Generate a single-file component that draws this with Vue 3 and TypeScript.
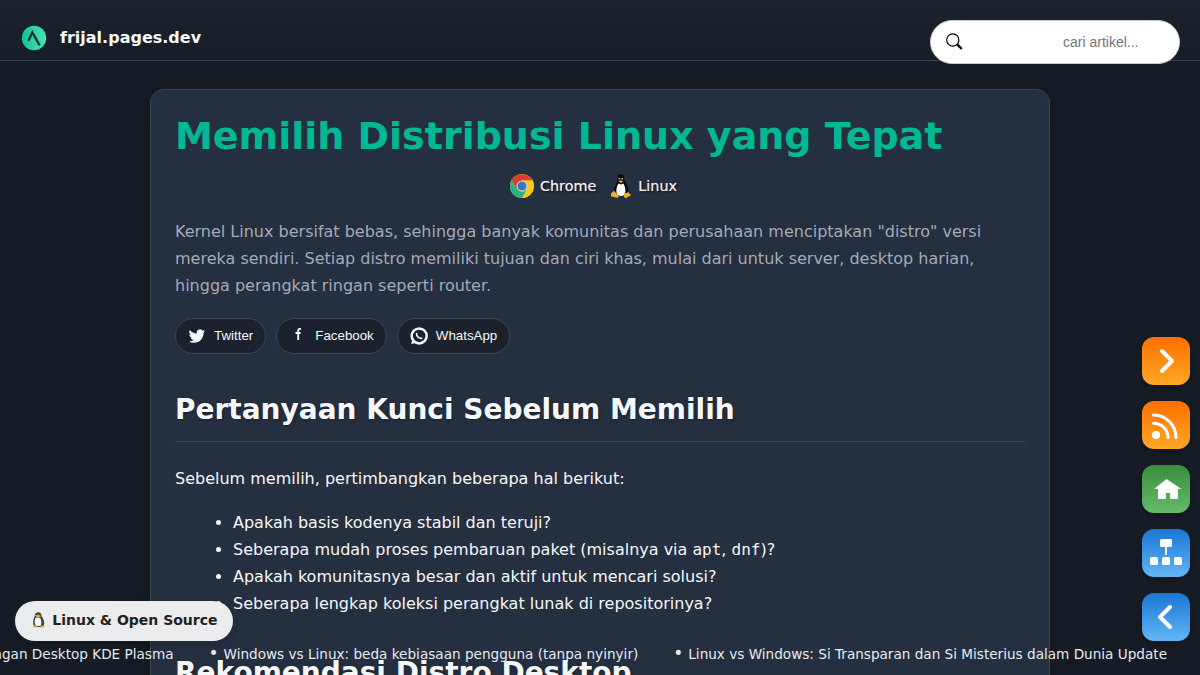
<script setup lang="ts">
const questions: string[] = [
  'Apakah basis kodenya stabil dan teruji?',
  'Seberapa mudah proses pembaruan paket (misalnya via `apt`, `dnf`)?',
  'Apakah komunitasnya besar dan aktif untuk mencari solusi?',
  'Seberapa lengkap koleksi perangkat lunak di repositorinya?',
]

const split = (text: string): { text: string; code: boolean }[] =>
  text.split('`').map((part, i) => ({ text: part, code: i % 2 === 1 }))
</script>

<template>
  <div class="page">
    <header class="topbar">
      <svg class="logo" viewBox="0 0 26 26">
        <defs>
          <linearGradient id="logoFill" x1="0" y1="0" x2="1" y2="0">
            <stop offset="0" stop-color="#12c294" />
            <stop offset="1" stop-color="#4be3b8" />
          </linearGradient>
        </defs>
        <circle cx="13" cy="13" r="12.2" fill="url(#logoFill)" />
        <path d="M7.4 15.9 11.3 7.2 18.6 20.4" fill="none" stroke="#12303a" stroke-width="2.3" stroke-linejoin="miter" />
      </svg>
      <span class="site">frijal.pages.dev</span>
      <div class="search">
        <svg width="18" height="18" viewBox="0 0 18 18" fill="none" stroke="#000">
          <circle cx="6.8" cy="7" r="6.1" stroke-width="1.2" />
          <path d="M11.2 11.4 15.8 16" stroke-width="2.4" />
        </svg>
        <input type="text" placeholder="cari artikel..." />
      </div>
    </header>

    <article class="card">
      <h1>Memilih Distribusi Linux yang Tepat</h1>
      <div class="tags">
        <span class="tag">
          <svg width="24" height="24" viewBox="0 0 24 24">
            <circle cx="12" cy="12" r="12" fill="#fbc918" />
            <path d="M1.6 6A12 12 0 0 1 22.4 6.500L12 6.600 6.800 15Z" fill="#dd3b32" />
            <path d="M1.600 6A12 12 0 0 0 12 24L17.200 15 12 17.400 6.800 15Z" fill="#27b583" />
            <path d="M22.600 6.600H12V17.400L17.200 15 12 24A12 12 0 0 0 22.600 6.600Z" fill="#fbc918" />
            <circle cx="12" cy="12" r="5.500" fill="#d3dde6" />
            <circle cx="12" cy="12" r="4.500" fill="#3b78b4" />
          </svg>
          Chrome
        </span>
        <span class="tag">
          <svg class="tux" width="24" height="24" viewBox="0 0 24 24">
            <path d="M8.5 4C8.3 1.2 10 0 11.8 0S15.4 1.4 15.2 4.6C15.3 7.8 19.7 11.5 19.3 18L15.5 22H8.2L4.8 17.5C5.2 12.5 8.7 9.4 8.5 4Z" fill="#080a0d" />
            <path d="M9.500 9.500 12 10.400 14.500 9.400C16.200 12.500 17.400 17.500 15.200 21Q12 23 8.700 21C6.300 17.800 7.600 12.400 9.500 9.500Z" fill="#fff" />
            <ellipse cx="10.500" cy="5" rx=".9" ry="1.200" fill="#aaa" />
            <ellipse cx="13.200" cy="5" rx="1" ry="1.200" fill="#aaa" />
            <circle cx="10.700" cy="5.200" r=".5" fill="#111" />
            <circle cx="13" cy="5.200" r=".5" fill="#111" />
            <path d="M9.400 7.400 11.700 6.200 14.300 7.400 12 9Z" fill="#e5a524" />
            <path d="M4.800 16.500 9.600 21.700C10 23.500 8.600 24 7 23.400L2.500 22.600C1.400 22 2.400 20.800 2.100 19 3 18.400 4.100 18.500 4.800 16.500ZM15.500 17.800C16 19.400 18.400 19.500 19 17.700 19.900 19.600 21 20 22 20.800 21.700 22 19.200 22.500 17.700 23.700 16 24.300 14.800 23.300 15 22Z" fill="#efb127" />
          </svg>
          Linux
        </span>
      </div>
      <p class="lead">
        Kernel Linux bersifat bebas, sehingga banyak komunitas dan perusahaan menciptakan "distro" versi
        mereka sendiri. Setiap distro memiliki tujuan dan ciri khas, mulai dari untuk server, desktop harian,
        hingga perangkat ringan seperti router.
      </p>
      <div class="share">
        <button>
          <svg width="18" height="18" viewBox="-1 -1 26 26" fill="#f4f8fc">
            <path d="M23.6 4.8a9.6 9.6 0 0 1-2.8.8 4.8 4.8 0 0 0 2.1-2.7 9.700 9.700 0 0 1-3.100 1.200 4.850 4.850 0 0 0-8.300 4.400A13.800 13.800 0 0 1 1.600 3.400a4.850 4.850 0 0 0 1.500 6.500 4.800 4.800 0 0 1-2.200-.6c0 2.300 1.600 4.400 3.900 4.900a4.900 4.900 0 0 1-2.200.1 4.860 4.860 0 0 0 4.500 3.400A9.800 9.800 0 0 1 0 19.700a13.800 13.800 0 0 0 7.500 2.200c9.100 0 14.300-7.700 14-14.600a10 10 0 0 0 2.100-2.500Z" />
          </svg>
          <span>Twitter</span>
        </button>
        <button>
          <svg width="18" height="18" viewBox="0 0 18 18">
            <path d="M12 1.900H10.800Q9.200 1.900 9.200 3.800V12.900M6.500 6H11.600" fill="none" stroke="#f4f8fc" stroke-width="1.900" />
          </svg>
          <span>Facebook</span>
        </button>
        <button>
          <svg width="18" height="18" viewBox="0 0 18 18" fill="none" stroke="#f4f8fc">
            <circle cx="9.200" cy="8.900" r="7.500" stroke-width="2.500" />
            <path d="M2.300 12.500 1.200 17 5.700 16Z" fill="#f4f8fc" stroke="none" />
            <path d="M6.600 6.500C6.300 9 8.900 11.700 11.700 11.300" stroke-width="1.600" stroke-linecap="round" />
          </svg>
          <span>WhatsApp</span>
        </button>
      </div>
      <h2>Pertanyaan Kunci Sebelum Memilih</h2>
      <p class="intro">Sebelum memilih, pertimbangkan beberapa hal berikut:</p>
      <ul>
        <li v-for="q in questions" :key="q"><template v-for="(part, i) in split(q)" :key="i"><code v-if="part.code">{{ part.text }}</code><template v-else>{{ part.text }}</template></template></li>
      </ul>
      <h2 class="next">Rekomendasi Distro Desktop</h2>
    </article>

    <nav class="rail">
      <a class="orange">
        <svg viewBox="0 0 48 48"><path d="M20 14 30 24 20 34" class="arrow" /></svg>
      </a>
      <a class="orange">
        <svg viewBox="0 0 48 48">
          <circle cx="14" cy="34" r="4.100" fill="#fff" />
          <path d="M11.500 22.200A14.500 14.500 0 0 1 26 36.500M11.500 14A22.500 22.500 0 0 1 34 36.500" fill="none" stroke="#fff" stroke-width="3" stroke-linecap="round" />
        </svg>
      </a>
      <a class="green">
        <svg viewBox="0 0 48 48" fill="#fff"><path d="M24.500 14 39.500 24H36V34H28.200V28H23.800V34H16V24H12Z" /></svg>
      </a>
      <a class="blue">
        <svg viewBox="0 0 48 48" fill="#fff">
          <rect x="18" y="10" width="12" height="8" rx="1.500" />
          <rect x="23" y="17" width="2" height="9" />
          <rect x="8" y="28" width="8" height="8" rx="1.500" />
          <rect x="20" y="28" width="8" height="8" rx="1.500" />
          <rect x="32" y="28" width="8" height="8" rx="1.500" />
        </svg>
      </a>
      <a class="blue">
        <svg viewBox="0 0 48 48"><path d="M28 14 18 24 28 34" class="arrow" /></svg>
      </a>
    </nav>

    <div class="badge">
      <svg width="14" height="16" viewBox="0 0 14 16">
        <path d="M2.800 3.800Q3.200.2 6.300.3T9.600 4.200Q13 8.200 11.900 13L10.300 15H4L1.200 12.500Q1 7 2.800 3.800Z" fill="#3c4245" />
        <path d="M3.800 5.500 8 5.700Q10.500 10 8.600 14H4.200Q1.400 10 3.800 5.500Z" fill="#f3f3f1" />
        <path d="M2.900 3.300 6.500 2.500 9.300 4.300 5.500 5.800Z" fill="#f1a51c" />
        <path d="M1 14.200 4 13.200 6 15.300H1.500ZM8 15.300 9.700 13.200 12.200 14.500 11 15.500Z" fill="#dba132" />
      </svg>
      <span>Linux &amp; Open Source</span>
    </div>

    <div class="ticker">
      <span>Mengenal Lingkungan Desktop KDE Plasma</span>
      <span><i>•</i>Windows vs Linux: beda kebiasaan pengguna (tanpa nyinyir)</span>
      <span><i>•</i>Linux vs Windows: Si Transparan dan Si Misterius dalam Dunia Update</span>
    </div>
  </div>
</template>

<style>
body {
  margin: 0;
  overflow: hidden;
}
</style>

<style scoped>
.page {
  position: relative;
  height: 675px;
  overflow: hidden;
  background: #161c26;
  color: #f5f8fb;
  font: 16px/27px 'DejaVu Sans', sans-serif;
}
.topbar {
  position: relative;
  z-index: 2;
  box-sizing: border-box;
  height: 61px;
  padding: 14px 20px 0 21px;
  display: flex;
  align-items: flex-start;
  border-bottom: 1px solid #3a474f;
  background: linear-gradient(#1c232e, #161d27);
}
.logo {
  width: 26px;
  height: 26px;
  margin-top: 11px;
}
.site {
  margin: 10px 0 0 13px;
  font-weight: bold;
}
.search {
  box-sizing: border-box;
  width: 250px;
  height: 44px;
  margin: 6px 0 0 auto;
  padding: 0 39px 0 15px;
  display: flex;
  align-items: center;
  justify-content: space-between;
  border: 1px solid #ccc;
  border-radius: 22px;
  background: #fff;
}
.search input {
  width: 77px;
  padding: 0;
  border: 0;
  outline: 0;
  background: transparent;
  font: 14px 'Liberation Sans', sans-serif;
}
.search input::placeholder {
  color: #757575;
}
.card {
  box-sizing: border-box;
  width: 900px;
  height: 700px;
  margin: 28px auto 0;
  padding: 24px;
  border: 1px solid #3a494f;
  border-radius: 14px;
  background: #242f3f;
  box-shadow: 0 8px 30px rgba(0, 0, 0, 0.3);
}
h1 {
  margin: 0;
  font-size: 38px;
  line-height: 44px;
  color: #00b894;
}
.tags {
  display: flex;
  justify-content: center;
  gap: 12px;
  margin: 15px 13px 0 0;
  height: 26px;
  align-items: center;
}
.tag {
  display: flex;
  align-items: center;
  gap: 6px;
  font-size: 14.4px;
  color: #eee;
  text-shadow: 0 0 1px #aaa, 1px 1px 2px #000;
}
.tux {
  margin: 0 -1px 0 1px;
}
.lead {
  margin: 19px 0 0;
  color: #a3abb5;
}
.share {
  display: flex;
  gap: 10px;
  margin-top: 19px;
}
button {
  box-sizing: border-box;
  height: 36px;
  padding: 0 12px;
  display: flex;
  align-items: center;
  gap: 8px;
  border: 1px solid #3a474f;
  border-radius: 18px;
  background: #1b222e;
  color: #f5f8fb;
  font: 13.333px 'Liberation Sans', sans-serif;
}
button span {
  padding-bottom: 2px;
}
h2 {
  margin: 32px 0 0;
  padding-bottom: 8px;
  border-bottom: 1px solid #3d4b55;
  font-size: 28px;
  line-height: 47px;
  text-shadow: 1px 1px 3px rgba(0, 0, 0, 0.25);
}
.intro {
  margin: 23px 0 0;
}
ul {
  margin: 17px 0 0;
  padding-left: 58px;
}
code {
  font: 16px 'DejaVu Sans Mono', monospace;
}
h2.next {
  position: relative;
  z-index: 4;
}
.rail {
  position: absolute;
  z-index: 5;
  right: 10px;
  top: 337px;
  display: grid;
  gap: 16px;
}
.rail a {
  width: 48px;
  height: 48px;
  border-radius: 12px;
  box-shadow: 0 2px 6px rgba(0, 0, 0, 0.3);
}
.rail svg {
  display: block;
}
.arrow {
  fill: none;
  stroke: #fff;
  stroke-width: 4;
  stroke-linecap: round;
  stroke-linejoin: round;
}
.orange {
  background: linear-gradient(#ff6f00, #ffa726);
}
.green {
  background: linear-gradient(#388e3c, #66bb6a);
}
.blue {
  background: linear-gradient(#1976d2, #64b5f6);
}
.badge {
  position: absolute;
  z-index: 5;
  left: 15px;
  top: 601px;
  box-sizing: border-box;
  width: 218px;
  height: 40px;
  padding: 0 15.5px 2px 17px;
  display: flex;
  align-items: center;
  justify-content: space-between;
  border-radius: 20px;
  background: #ebecee;
  color: #222;
  font-size: 14px;
  font-weight: bold;
  white-space: nowrap;
  box-shadow: 0 4px 12px rgba(0, 0, 0, 0.15);
}
.ticker {
  position: absolute;
  z-index: 3;
  right: 33px;
  top: 641px;
  display: flex;
  gap: 36px;
  font-size: 13.6px;
  white-space: nowrap;
  color: #e6ebf0;
}
.ticker i {
  display: inline-block;
  width: 14px;
  font-size: 17px;
  line-height: 1;
  font-style: normal;
  text-indent: -1px;
}
</style>
